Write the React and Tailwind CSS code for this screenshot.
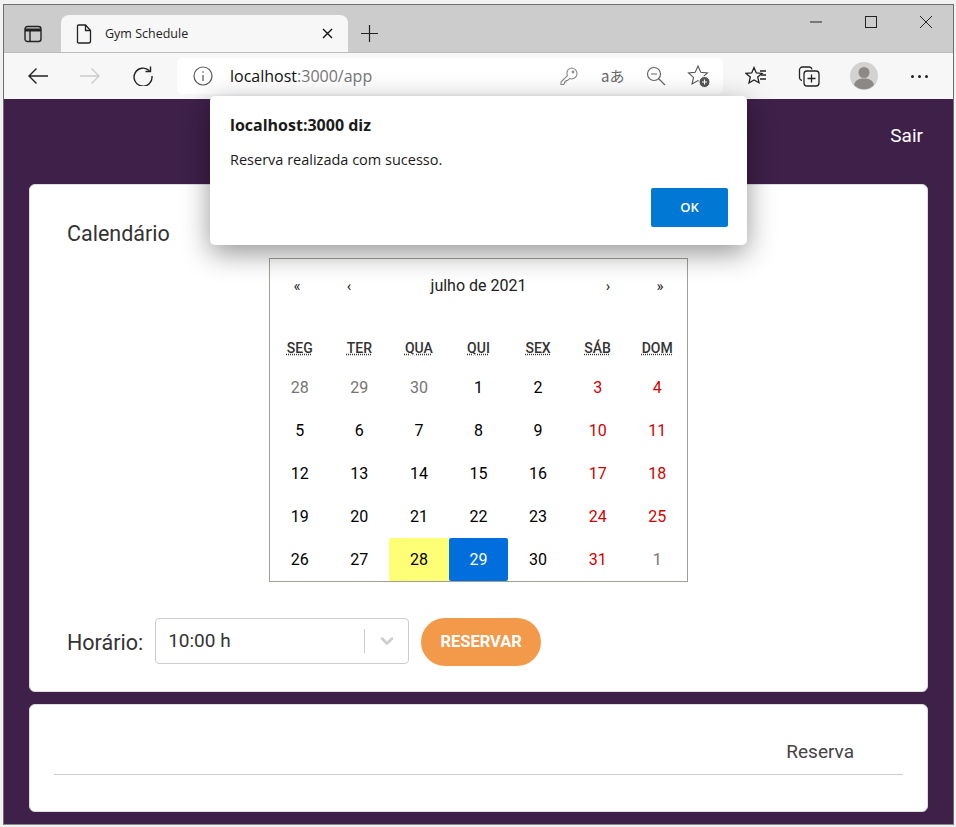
import { ChevronDown } from "lucide-react";

const weekdays = ["SEG", "TER", "QUA", "QUI", "SEX", "SÁB", "DOM"];

// 5 rows of julho de 2021, starting on monday 28/06
const days = [
  28, 29, 30, 1, 2, 3, 4,
  5, 6, 7, 8, 9, 10, 11,
  12, 13, 14, 15, 16, 17, 18,
  19, 20, 21, 22, 23, 24, 25,
  26, 27, 28, 29, 30, 31, 1,
];

function dayClass(index) {
  if (index === 30) return "bg-[#ffff76] text-black rounded-[2px]";
  if (index === 31) return "bg-[#006edc] text-white rounded-[2px]";
  if (index < 3 || index === 34) return "text-[#757575]";
  if (index % 7 >= 5) return "text-[#d10000]";
  return "text-black";
}

function Calendar() {
  return (
    <div className="mx-auto w-[419px] border border-[#a0a096] bg-white">
      <div className="flex h-[52px] items-center px-px pt-[2px] mb-5 text-[#222]">
        <span className="w-[52px] text-center text-[15px]">«</span>
        <span className="w-[52px] text-center text-[15px]">‹</span>
        <span className="flex-1 text-center text-base">julho de 2021</span>
        <span className="w-[52px] text-center text-[15px]">›</span>
        <span className="w-[52px] text-center text-[15px]">»</span>
      </div>
      <div className="grid grid-cols-7 h-[35px] items-center text-center text-[14px] font-medium text-[#333]">
        {weekdays.map((name) => (
          <span key={name}>
            <abbr title={name} className="underline decoration-dotted">
              {name}
            </abbr>
          </span>
        ))}
      </div>
      <div className="grid grid-cols-7">
        {days.map((day, i) => (
          <div
            key={i}
            className={`flex h-[43px] items-center justify-center text-base ${dayClass(i)}`}
          >
            {day}
          </div>
        ))}
      </div>
    </div>
  );
}

function BrowserChrome() {
  return (
    <div className="font-['Open_Sans',sans-serif]">
      {/* Tab strip */}
      <div className="flex h-[47px] bg-[#cccccc] text-[#1a1a1a]">
        <div className="flex w-[57px] items-center justify-center pt-[10px]">
          <svg width="18" height="18" viewBox="0 0 18 18" fill="none" stroke="#222" strokeWidth="1.4">
            <rect x="1" y="1.5" width="16" height="15" rx="2.5" />
            <path d="M1 5h16" strokeWidth="3" />
            <path d="M6 6v10" />
          </svg>
        </div>
        <div className="mt-[10px] flex w-[287px] items-center rounded-t-lg bg-[#f7f7f7] px-[15px]">
          <svg width="16" height="20" viewBox="0 0 16 20" fill="none" stroke="#222" strokeWidth="1.3">
            <path d="M2.5 1h7l5 5.5V17a2 2 0 0 1-2 2h-10a2 2 0 0 1-1-.4V2a1 1 0 0 1 1-1z" />
            <path d="M9.5 1v5.5h5" />
          </svg>
          <span className="ml-[13px] flex-1 pt-[1px] text-[12.5px] text-[#222]">Gym Schedule</span>
          <svg width="11" height="11" viewBox="0 0 11 11" stroke="#111" strokeWidth="1.4">
            <path d="M1 1l9 9M10 1l-9 9" />
          </svg>
        </div>
        <div className="flex w-[42px] items-center justify-center pt-[9px]">
          <svg width="17" height="17" viewBox="0 0 17 17" stroke="#222" strokeWidth="1.2">
            <path d="M8.5 0v17M0 8.5h17" />
          </svg>
        </div>
        <div className="ml-auto flex items-start pt-[11px] pr-[21px] gap-[43px]">
          <svg width="12" height="12" viewBox="0 0 12 12" stroke="#222" strokeWidth="1">
            <path d="M0 6h12" />
          </svg>
          <svg width="12" height="12" viewBox="0 0 12 12" fill="none" stroke="#222" strokeWidth="1">
            <rect x="0.5" y="0.5" width="11" height="11" />
          </svg>
          <svg width="12" height="12" viewBox="0 0 12 12" stroke="#222" strokeWidth="1">
            <path d="M0 0l12 12M12 0L0 12" />
          </svg>
        </div>
      </div>

      {/* Toolbar */}
      <div className="flex h-[47px] items-center border-t border-[#bdbdbd] bg-[#f7f7f7]">
        <div className="flex w-[173px] items-center pl-[23px]">
          <svg width="22" height="18" viewBox="0 0 22 18" fill="none" stroke="#222" strokeWidth="1.4">
            <path d="M21 9H2M9.5 1.5L2 9l7.5 7.5" />
          </svg>
          <svg className="ml-[30px]" width="22" height="18" viewBox="0 0 22 18" fill="none" stroke="#ccc" strokeWidth="1.4">
            <path d="M1 9h19M12.5 1.5L20 9l-7.5 7.5" />
          </svg>
          <svg className="ml-[32px]" width="20" height="20" viewBox="0 0 20 20" fill="none" stroke="#222" strokeWidth="1.4">
            <path d="M16.5 4.8A9 9 0 1 0 19 10" />
            <path d="M17.5 0.5v5h-5" />
          </svg>
        </div>
        <div className="flex h-9 w-[546px] items-center rounded-[5px] bg-white">
          <svg className="ml-4" width="20" height="20" viewBox="0 0 20 20" fill="none" stroke="#555" strokeWidth="1.2">
            <circle cx="10" cy="10" r="9" />
            <path d="M10 9v6M10 5.2v1.6" />
          </svg>
          <span className="ml-[17px] flex-1 text-[16px] text-[#111]">
            localhost<span className="text-[#767676]">:3000/app</span>
          </span>
          <svg width="18" height="18" viewBox="0 0 18 18" fill="none" stroke="#888" strokeWidth="1.1">
            <path d="M11.5 1a5.5 5.5 0 0 1 0 11c-.8 0-1.300-.1-2-.4L7.5 13.5H6V15H4.5v1.5l-1 1H1V15l6.4-6.4c-.3-.7-.4-1.200-.4-2A5.5 5.5 0 0 1 11.5 1z" />
            <circle cx="13" cy="5" r="0.9" />
          </svg>
          <span className="ml-[23px] w-[24px] font-['Noto_Sans_CJK_JP',sans-serif] text-[15px] text-[#666]">aあ</span>
          <svg className="ml-[21px]" width="20" height="20" viewBox="0 0 20 20" fill="none" stroke="#666" strokeWidth="1.2">
            <circle cx="8" cy="8" r="6.5" />
            <path d="M5 8h6M12.5 12.5L19 19" />
          </svg>
          <svg className="ml-[21px] mr-[12px]" width="24" height="24" viewBox="0 0 24 24" fill="none" stroke="#555" strokeWidth="1.1">
            <path d="M11 2l2.8 6.2 6.7.7-5 4.5 1.4 6.6-5.900-3.400-5.900 3.400 1.400-6.600-5-4.500 6.700-.7z" />
            <circle cx="17.5" cy="18" r="5.5" fill="#555" stroke="#fff" strokeWidth="1" />
            <path d="M17.5 15.5v5M15 18h5" stroke="#fff" />
          </svg>
        </div>
        <svg className="ml-[22px]" width="22" height="20" viewBox="0 0 22 20" fill="none" stroke="#222" strokeWidth="1.3">
          <path d="M9 1.5l2.3 5.4 5.7.5-4.3 3.7 1.3 5.6L9 14l-5 3 1.3-6L1 7.4l5.7-.5z" />
          <path d="M15 5h6M16 9h5M15 13h6" />
        </svg>
        <svg className="ml-[31px]" width="22" height="22" viewBox="0 0 22 22" fill="none" stroke="#222" strokeWidth="1.3">
          <path d="M4 15.5A3 3 0 0 1 1.5 13V5A3 3 0 0 1 4.5 2h7A3 3 0 0 1 14 4.5" />
          <rect x="6" y="6" width="15" height="15" rx="3" />
          <path d="M13.5 9.5v8M9.5 13.5h8" />
        </svg>
        <svg className="ml-[30px]" width="28" height="28" viewBox="0 0 28 28">
          <circle cx="14" cy="14" r="14" fill="#d4d2d0" />
          <circle cx="14" cy="10.5" r="5.5" fill="#8b8886" />
          <path d="M4 23c1-5 5-6.5 10-6.5S23 18 24 23a14 14 0 0 1-20 0z" fill="#8b8886" />
        </svg>
        <span className="ml-[33px] flex gap-[4px]">
          <i className="block size-[3px] rounded-full bg-[#222]" />
          <i className="block size-[3px] rounded-full bg-[#222]" />
          <i className="block size-[3px] rounded-full bg-[#222]" />
        </span>
      </div>
    </div>
  );
}

function AlertDialog() {
  return (
    <div className="absolute left-[206px] top-[91px] z-10 h-[149px] w-[537px] rounded-[5px] bg-white pl-5 pr-[19px] pt-[17px] font-['Open_Sans',sans-serif] shadow-[0_8px_28px_rgba(0,0,0,0.42)]">
      <div className="text-base font-bold leading-6 text-[#1a1a1a]">localhost:3000 diz</div>
      <div className="mt-[13px] text-[14.5px] leading-5 text-[#1a1a1a]">Reserva realizada com sucesso.</div>
      <div className="mt-[18px] flex justify-end">
        <button className="h-[39px] w-[77px] rounded-[2px] bg-[#0078d4] text-[13px] font-semibold text-white">
          OK
        </button>
      </div>
    </div>
  );
}

export default function App() {
  return (
    <div className="h-[827px] w-[956px] bg-[#f2f2f2] pl-[3px] pr-[2px] pt-1 pb-[2px]">
      <div className="relative flex h-full flex-col overflow-hidden border border-[#6e6e6e] border-b-[#8a8a8a]">
        <BrowserChrome />
        <AlertDialog />

        <main className="flex-1 bg-[#3e2049] px-[25px] font-['Roboto',sans-serif] text-[#333]">
          <header className="flex h-[85px] items-center justify-end pb-[11px] pr-[5px]">
            <span className="text-[19px] text-white">Sair</span>
          </header>

          <section className="h-[508px] rounded-md border border-[#dddddd] bg-white px-[37px] pt-[35px]">
            <h2 className="mb-[10px] text-[21.5px] leading-7 font-normal text-[#333]">Calendário</h2>
            <Calendar />
            <div className="mt-9 flex items-start">
              <label className="mt-[11px] text-[21.5px] leading-7">Horário:</label>
              <div className="ml-3 flex h-[46px] w-[254px] items-center rounded border border-[#cccccc] bg-white pl-[12px] text-[19px]">
                <span className="flex-1">10:00 h</span>
                <span className="h-6 w-px bg-[#cccccc]" />
                <ChevronDown className="ml-[12px] mr-[11px] text-[#cccccc]" size={20} strokeWidth={3} />
              </div>
              <button className="ml-3 h-12 w-[120px] rounded-full bg-[#f2994a] text-[16.5px] font-bold text-white">
                RESERVAR
              </button>
            </div>
          </section>

          <section className="mt-3 h-[108px] rounded-md border border-[#dddddd] bg-white px-6 pt-[33px]">
            <div className="flex h-[37px] justify-end border-b border-[#cccccc] pr-[49px] text-[19px] leading-7 text-[#444]">
              Reserva
            </div>
          </section>
        </main>
      </div>
    </div>
  );
}
